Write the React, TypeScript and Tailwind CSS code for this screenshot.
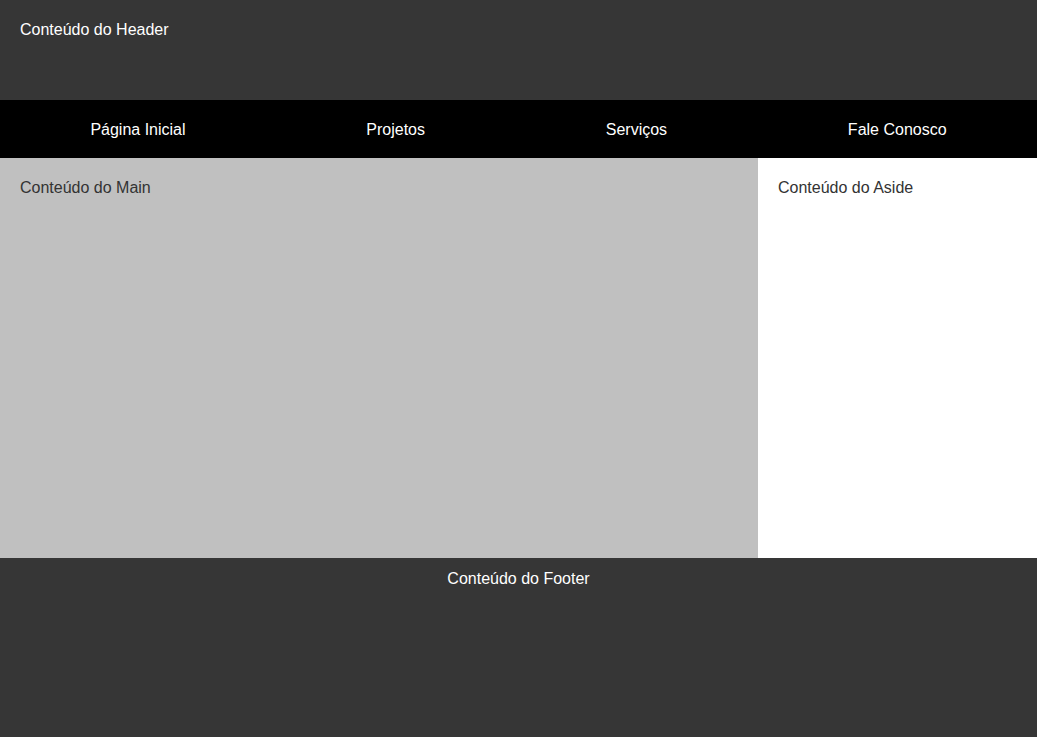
export default function App() {
  const links = ["Página Inicial", "Projetos", "Serviços", "Fale Conosco"];
  return (
    <div className="flex min-h-[737px] flex-col text-base font-['Liberation_Sans',Arial,sans-serif] leading-[20px]">
      <header className="h-[100px] bg-[#363636] p-5 text-white">Conteúdo do Header</header>
      <nav className="h-[58px] bg-black">
        <ul className="flex h-full items-center justify-around pt-[2px] text-white">
          {links.map((l) => (
            <li key={l}>{l}</li>
          ))}
        </ul>
      </nav>
      <div className="flex h-[400px]">
        <main className="w-[758px] bg-[#c0c0c0] p-5 text-[#333333]">Conteúdo do Main</main>
        <aside className="flex-1 bg-white p-5 text-[#333333]">Conteúdo do Aside</aside>
      </div>
      <footer className="flex-1 bg-[#363636] pt-[11px] text-center text-white">Conteúdo do Footer</footer>
    </div>
  );
}
